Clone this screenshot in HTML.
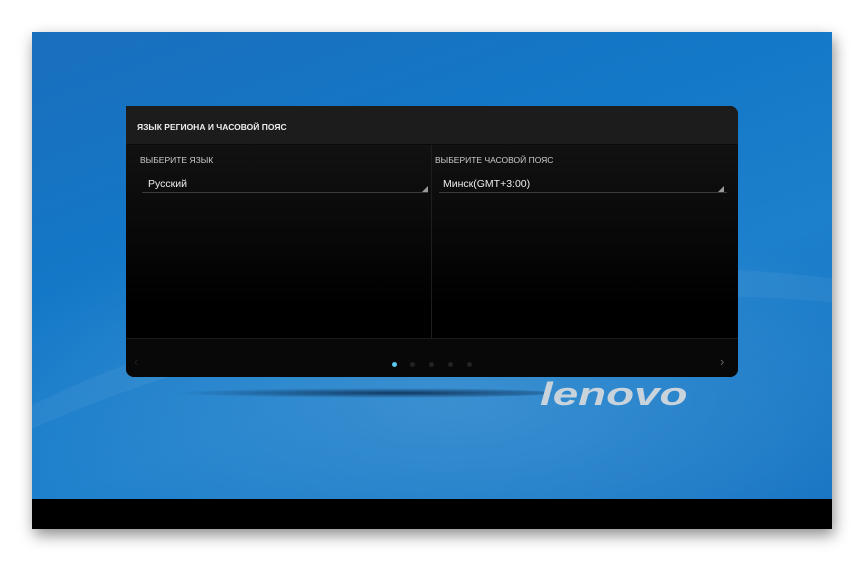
<!DOCTYPE html>
<html><head><meta charset="utf-8"><style>
*{margin:0;padding:0;box-sizing:border-box}
html{overflow:hidden;width:864px;height:561px}
body{width:864px;height:561px;background:#fff;position:relative;overflow:hidden;font-family:"Liberation Sans","DejaVu Sans",sans-serif}
#scr{position:absolute;left:32px;top:32px;width:800px;height:497px;overflow:hidden;box-shadow:2px 6px 14px rgba(0,0,0,.45);
background:radial-gradient(ellipse 500px 200px at 420px 370px,#3a8fd0,transparent),linear-gradient(160deg,#1a6fbd 0%,#1378c8 35%,#1d80cc 60%,#1670c0 100%)}
.sw{position:absolute;border-radius:50%;border-top:30px solid rgba(255,255,255,.05)}
#bar{position:absolute;left:0;top:467px;width:800px;height:30px;background:#000}
#dlg{position:absolute;left:94px;top:74px;width:612px;height:271px;border-radius:0 8px 8px 8px;overflow:hidden;background:linear-gradient(#161616,#000 200px)}
#hd{height:39px;background:#1c1c1c;color:#eee;font-size:8.5px;font-weight:bold;padding:16px 0 0 11px;border-bottom:1px solid #0a0a0a}
.col{position:absolute;top:39px;height:193px}
.lab{color:#ccc;font-size:8.5px;position:absolute;top:10px}
.val{color:#eee;font-size:10.5px;position:absolute;top:33px}
.ul{position:absolute;top:47px;height:1px;background:#3a3a3a}
.tri{position:absolute;top:41px;width:0;height:0;border-left:6px solid transparent;border-bottom:6px solid #9a9a9a}
#ft{position:absolute;left:0;top:232px;width:612px;height:39px;background:#080808;border-top:1px solid #1a1a1a}
.dot{position:absolute;top:23px;width:5px;height:5px;border-radius:50%;background:#222}
#logo{position:absolute;left:508px;top:344px;font-size:32px;line-height:36px;font-weight:bold;font-style:italic;color:#c9d3dc;transform:scaleX(1.43);transform-origin:left top}
#sh{position:absolute;left:140px;top:356px;width:380px;height:10px;border-radius:50%;background:radial-gradient(ellipse at 60% 50%,rgba(0,20,50,.7),transparent 70%)}
</style></head><body>
<div id="scr">
<div class="sw" style="left:-200px;top:250px;width:1300px;height:500px;transform:rotate(-8deg)"></div>
<div class="sw" style="left:300px;top:-300px;width:900px;height:700px;transform:rotate(20deg)"></div>
<div id="sh"></div>
<div id="logo">lenovo</div>
<div id="dlg">
<div id="hd">ЯЗЫК РЕГИОНА И ЧАСОВОЙ ПОЯС</div>
<div class="col" style="left:0;width:306px;border-right:1px solid #1e1e1e">
<div class="lab" style="left:14px">ВЫБЕРИТЕ ЯЗЫК</div>
<div class="val" style="left:22px">Русский</div>
<div class="ul" style="left:16px;width:286px"></div>
<div class="tri" style="left:296px"></div>
</div>
<div class="col" style="left:307px;width:305px">
<div class="lab" style="left:2px">ВЫБЕРИТЕ ЧАСОВОЙ ПОЯС</div>
<div class="val" style="left:10px">Минск(GMT+3:00)</div>
<div class="ul" style="left:6px;width:288px"></div>
<div class="tri" style="left:285px"></div>
</div>
<div id="ft">
<div class="dot" style="left:266px;background:#5bc6ee"></div>
<div class="dot" style="left:284px"></div>
<div class="dot" style="left:303px"></div>
<div class="dot" style="left:322px"></div>
<div class="dot" style="left:341px"></div>
<div style="position:absolute;left:8px;top:15px;color:#222;font-size:13px">‹</div>
<div style="position:absolute;left:594px;top:15px;color:#666;font-size:13px">›</div>
</div>
</div>
<div id="bar"></div>
</div>
</body></html>
